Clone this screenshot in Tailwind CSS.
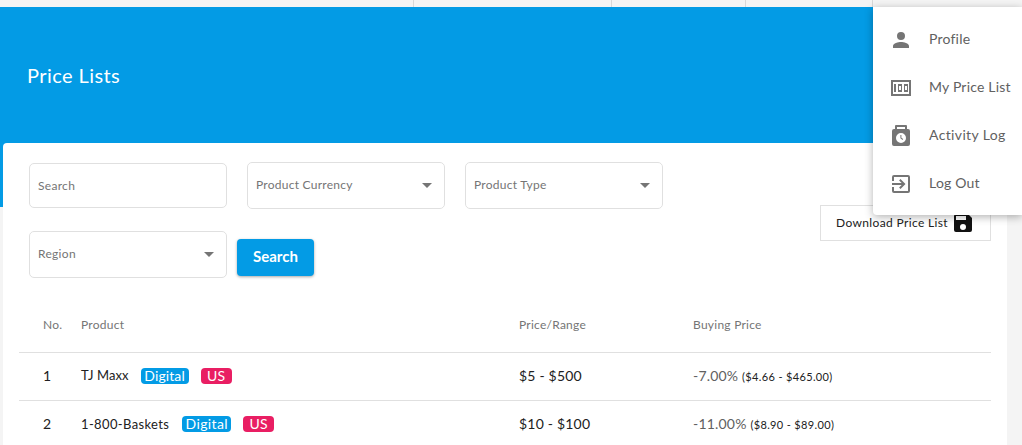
<!DOCTYPE html>
<html><head><meta charset="utf-8"><script src="https://cdn.jsdelivr.net/npm/@tailwindcss/browser@4"></script></head>
<body class="h-[445px] w-[1022px] overflow-hidden bg-[#f4f4f4] font-['Lato',sans-serif] relative">
<div class="flex h-[7px]">
  <div class="w-[413px] border-r border-[#d8d8d8] box-content"></div>
  <div class="w-[197px] border-r border-[#d8d8d8] box-content"></div>
  <div class="w-[133px] border-r border-[#d8d8d8] box-content"></div>
  <div class="w-[126px] border-r border-[#d8d8d8] box-content"></div>
</div>
<div class="h-[200px] bg-[#039be5] pl-[27px] pt-[55px]">
  <h1 class="text-[20px] leading-[26px] text-white tracking-[0.42px]">Price Lists</h1>
</div>
<main class="-mt-[64px] ml-[3px] w-[1004px] h-[302px] overflow-hidden bg-white rounded-t-[4px] pl-[16px] pr-[16px]">
  <div class="flex h-[157px] items-start">
    <div class="w-[801px] pl-[10px] pt-[19px]">
      <div class="flex items-center gap-[20px] h-[47px]">
        <div class="w-[198px] h-[45px] border border-[#e0e0e0] rounded-[5px] flex items-center px-2 text-[12px] text-[#757575] tracking-[0.3px]">Search</div>
        <div class="w-[198px] h-[47px] border border-[#e0e0e0] rounded-[5px] flex items-center justify-between pl-2 pr-[12px] text-[12px] text-[#757575] tracking-[0.25px]"><span class="mb-[2px]">Product Currency</span><span class="w-0 h-0 border-x-[5px] border-x-transparent border-t-[5px] border-t-[#757575]"></span></div>
        <div class="w-[198px] h-[47px] border border-[#e0e0e0] rounded-[5px] flex items-center justify-between pl-2 pr-[12px] text-[12px] text-[#757575] tracking-[0.25px]"><span class="mb-[2px]">Product Type</span><span class="w-0 h-0 border-x-[5px] border-x-transparent border-t-[5px] border-t-[#757575]"></span></div>
      </div>
      <div class="flex items-start gap-[10px] mt-[22px]">
        <div class="w-[198px] h-[47px] border border-[#e0e0e0] rounded-[5px] flex items-center justify-between pl-2 pr-[12px] text-[12px] text-[#757575] tracking-[0.3px]"><span class="mb-[2px]">Region</span><span class="w-0 h-0 border-x-[5px] border-x-transparent border-t-[5px] border-t-[#757575]"></span></div>
        <button class="mt-[8px] w-[77px] h-[37px] bg-[#039be5] rounded-[4px] text-white text-[15px] font-bold pb-[2px] shadow-[0_1px_3px_rgba(0,0,0,0.35)]">Search</button>
      </div>
    </div>
    <button class="mt-[62px] w-[171px] h-[36px] border border-[#e0e0e0] flex items-center pl-[15px] gap-[3px] text-[12px] text-[#212121] tracking-[0.36px]">Download Price List
      <svg class="w-[24px] h-[24px]" viewBox="0 0 24 24" fill="#111"><path d="M17 3H5a2 2 0 0 0-2 2v14a2 2 0 0 0 2 2h14a2 2 0 0 0 2-2V7l-4-4zm-5 16a3 3 0 1 1 0-6 3 3 0 0 1 0 6zm3-10H5V5h10v4z"/></svg>
    </button>
  </div>
  <table class="w-[972px] table-fixed border-collapse text-left">
    <thead><tr class="h-[52px] border-b border-[#e0e0e0] text-[12px] text-[#757575] tracking-[0.25px]">
      <th class="w-[62px] pl-[24px] pb-[2px] font-normal">No.</th><th class="w-[438px] pb-[2px] font-normal">Product</th><th class="w-[174px] pb-[2px] font-normal">Price/Range</th><th class="pb-[2px] font-normal">Buying Price</th>
    </tr></thead>
    <tbody>
      <tr class="h-[48px] border-b border-[#e0e0e0] text-[#212121]">
        <td class="pl-[24px] text-[14px] pb-[2px]">1</td>
        <td class="text-[13px]"><div class="flex items-center tracking-[0.1px]">TJ Maxx<span class="ml-[12px] w-[48px] h-[16px] text-center rounded-[4px] bg-[#039be5] text-white text-[14px] leading-[16px]">Digital</span><span class="ml-[12px] w-[31px] h-[16px] text-center rounded-[4px] bg-[#e91e63] text-white text-[14px] leading-[16px]">US</span></div></td>
        <td class="text-[14px] tracking-[0.2px] pb-[2px]">$5 - $500</td>
        <td class="text-[14px] text-[#616161] tracking-[0.2px] pb-[2px]">-7.00% <span class="text-[11px] text-[#212121] tracking-[0.35px]">($4.66 - $465.00)</span></td>
      </tr>
      <tr class="h-[48px] text-[#212121]">
        <td class="pl-[24px] text-[14px] pb-[2px]">2</td>
        <td class="text-[13px]"><div class="flex items-center tracking-[0.36px]">1-800-Baskets<span class="ml-[13px] w-[49px] h-[16px] text-center rounded-[4px] bg-[#039be5] text-white text-[14px] leading-[16px]">Digital</span><span class="ml-[12px] w-[31px] h-[16px] text-center rounded-[4px] bg-[#e91e63] text-white text-[14px] leading-[16px]">US</span></div></td>
        <td class="text-[14px] tracking-[0.2px] pb-[2px]">$10 - $100</td>
        <td class="text-[14px] text-[#616161] tracking-[0.2px] pb-[2px]">-11.00% <span class="text-[11px] text-[#212121] tracking-[0.35px]">($8.90 - $89.00)</span></td>
      </tr>
    </tbody>
  </table>
</main>
<nav class="absolute left-[873px] top-[7px] w-[149px] h-[208px] bg-white rounded-bl-[4px] shadow-[0_2px_8px_rgba(0,0,0,0.3)] pt-[9px] text-[14px] text-[#616161] tracking-[0.2px]">
  <a class="flex items-center h-[48px] pl-[16px] gap-[16px]"><svg class="w-[24px] h-[24px]" viewBox="0 0 24 24" fill="#757575"><path d="M12 12a4 4 0 1 0 0-8 4 4 0 0 0 0 8zm0 2c-2.67 0-8 1.34-8 4v2h16v-2c0-2.66-5.33-4-8-4z"/></svg><span class="mb-[4px]">Profile</span></a>
  <a class="flex items-center h-[48px] pl-[16px] gap-[16px]"><svg class="w-[24px] h-[24px]" viewBox="0 0 24 24" fill="#757575" fill-rule="evenodd"><path d="M2 4h20v16H2V4zm2 2v12h16V6H4z"/><path d="M5 8h2v8H5zM9 8h4v8H9zm1 2v4h2v-4zM15 8h4v8h-4zm1 2v4h2v-4z"/></svg><span class="mb-[4px]">My Price List</span></a>
  <a class="flex items-center h-[48px] pl-[16px] gap-[16px]"><svg class="w-[24px] h-[24px]" viewBox="0 0 24 24" fill="#757575"><path fill-rule="evenodd" d="M7 1h10a1 1 0 0 1 1 1v3h1a2 2 0 0 1 2 2v13a2 2 0 0 1-2 2H5a2 2 0 0 1-2-2V7a2 2 0 0 1 2-2h1V2a1 1 0 0 1 1-1zm1 2v2h8V3H8zm4 6a5 5 0 1 0 0 10 5 5 0 0 0 0-10z"/><path d="M11.400 11h1v2.800l1.800 1.300-.6.800-2.200-1.600V11z"/></svg><span class="mb-[4px] tracking-[0.36px]">Activity Log</span></a>
  <a class="flex items-center h-[48px] pl-[16px] gap-[16px]"><svg class="w-[24px] h-[24px]" viewBox="0 0 24 24" fill="#757575"><path d="M10.090 15.590 11.500 17l5-5-5-5-1.410 1.410L12.670 11H3v2h9.670l-2.580 2.590zM19 3H5a2 2 0 0 0-2 2v4h2V5h14v14H5v-4H3v4a2 2 0 0 0 2 2h14a2 2 0 0 0 2-2V5a2 2 0 0 0-2-2z"/></svg><span class="mb-[4px]">Log Out</span></a>
</nav>
</body></html>
